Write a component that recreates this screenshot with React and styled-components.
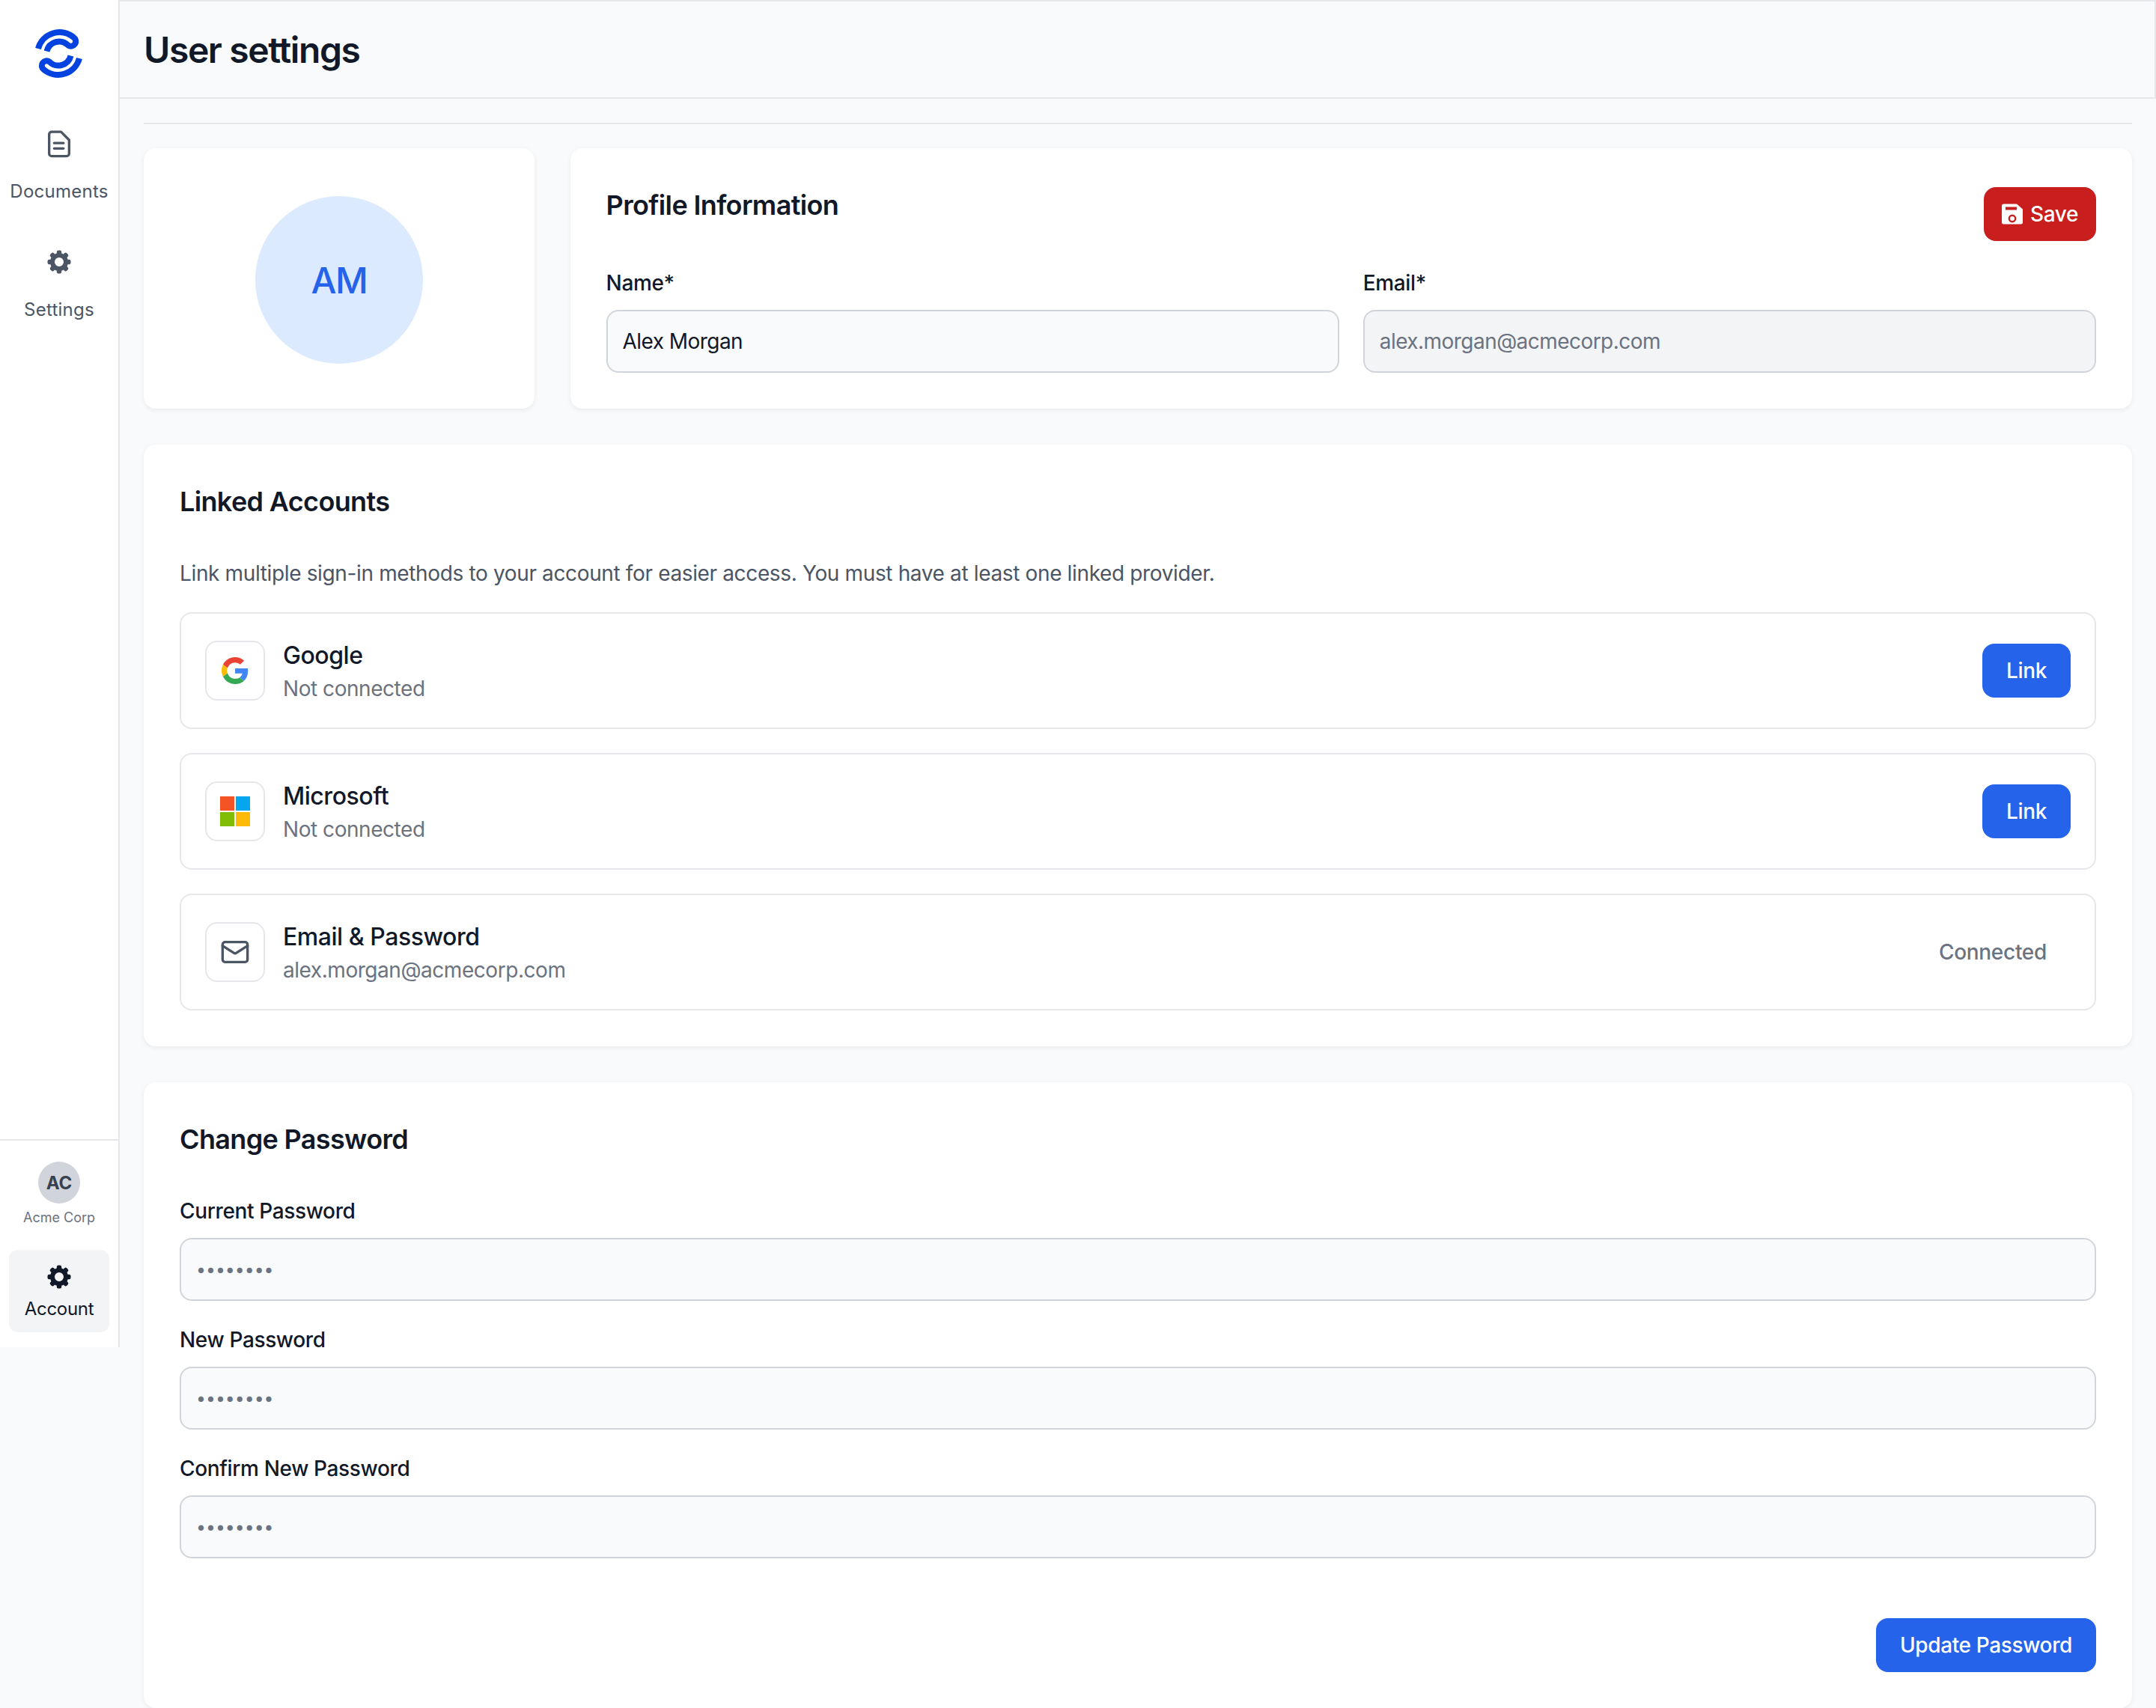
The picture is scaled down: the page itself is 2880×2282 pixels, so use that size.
import React from "react";
import styled, { createGlobalStyle } from "styled-components";
import { Mail } from "lucide-react";

const GlobalStyle = createGlobalStyle`
  * {
    box-sizing: border-box;
  }
  body {
    margin: 0;
    background: #f9fafb;
    font-family: Inter, "Noto Sans", sans-serif;
    color: #111827;
  }
`;

const Logo = () => (
  <LogoSvg viewBox="0 0 80 80" fill="none" stroke="#0443e0" strokeWidth="8">
    <path d="M12 33 A29.5 29.5 0 0 1 59.5 18 A6.4 6.4 0 0 1 52 28.5 A17 17 0 0 0 23.500 36.5" />
    <path
      d="M12 33 A29.5 29.5 0 0 1 59.5 18 A6.4 6.4 0 0 1 52 28.5 A17 17 0 0 0 23.500 36.5"
      transform="rotate(180 39.5 39.5)"
    />
  </LogoSvg>
);

const DocIcon = () => (
  <svg width="40" height="40" viewBox="0 0 24 24" fill="none" stroke="#4b5563" strokeWidth="2" strokeLinejoin="round">
    <path d="M6 2.5h7.5L20 9v11a2 2 0 0 1-2 2H6a2 2 0 0 1-2-2V4.500a2 2 0 0 1 2-2z" />
    <path d="M8 11.500h7.500M8 15.800h7.500" strokeLinecap="round" />
  </svg>
);

const Gear = ({ color }) => (
  <svg width="32" height="32" viewBox="0 0 32 32" fill="none">
    <circle cx="16" cy="16" r="9" stroke={color} strokeWidth="6" />
    {[0, 45, 90, 135, 180, 225, 270, 315].map((a) => (
      <rect key={a} x="12.800" y="0.500" width="6.400" height="7" rx="2.200" fill={color} transform={`rotate(${a} 16 16)`} />
    ))}
  </svg>
);

const SaveIcon = () => (
  <svg width="28" height="28" viewBox="0 0 28 28">
    <path d="M3 0.500H20L28 7.500V25a2.500 2.500 0 0 1-2.500 2.500H2.500A2.500 2.500 0 0 1 0 25V3a2.500 2.500 0 0 1 3-2.500z" fill="#fff" />
    <rect x="5" y="4.500" width="15" height="4" fill="#c81e1e" />
    <circle cx="14" cy="20" r="4.200" fill="#fff" stroke="#c81e1e" strokeWidth="2.400" />
  </svg>
);

const GoogleIcon = () => (
  <svg width="36" height="36" viewBox="0 0 48 48">
    <path fill="#EA4335" d="M24 9.500c3.540 0 6.710 1.220 9.210 3.600l6.850-6.850C35.900 2.380 30.470 0 24 0 14.620 0 6.510 5.380 2.560 13.220l7.980 6.190C12.430 13.720 17.740 9.500 24 9.500z" />
    <path fill="#4285F4" d="M46.980 24.550c0-1.570-.15-3.090-.38-4.550H24v9.020h12.940c-.58 2.960-2.260 5.480-4.780 7.180l7.730 6c4.510-4.180 7.090-10.360 7.090-17.650z" />
    <path fill="#FBBC05" d="M10.530 28.590c-.48-1.450-.76-2.990-.76-4.590s.27-3.140.76-4.590l-7.980-6.190C.92 16.460 0 20.120 0 24c0 3.880.92 7.540 2.560 10.780l7.970-6.190z" />
    <path fill="#34A853" d="M24 48c6.480 0 11.930-2.130 15.890-5.810l-7.730-6c-2.150 1.450-4.920 2.300-8.160 2.300-6.260 0-11.570-4.220-13.470-9.910l-7.980 6.190C6.510 42.620 14.620 48 24 48z" />
  </svg>
);

const MicrosoftIcon = () => (
  <svg width="40" height="40" viewBox="0 0 40 40">
    <rect width="19" height="19" fill="#f35325" />
    <rect x="21" width="19" height="19" fill="#05a6f0" />
    <rect y="21" width="19" height="19" fill="#81bc06" />
    <rect x="21" y="21" width="19" height="19" fill="#ffba08" />
  </svg>
);

const providers = [
  { name: "Google", sub: "Not connected", icon: <GoogleIcon /> },
  { name: "Microsoft", sub: "Not connected", icon: <MicrosoftIcon /> },
  {
    name: "Email & Password",
    sub: "alex.morgan@acmecorp.com",
    icon: <Mail size={40} color="#4b5563" />,
    connected: true,
  },
];

const passwordFields = ["Current Password", "New Password", "Confirm New Password"];

const App = () => {
  return (
    <Page>
      <GlobalStyle />
      <Sidebar>
        <Logo />
        <NavItem>
          <IconSlot>
            <DocIcon />
          </IconSlot>
          <span>Documents</span>
        </NavItem>
        <NavItem>
          <IconSlot>
            <Gear color="#4b5563" />
          </IconSlot>
          <span>Settings</span>
        </NavItem>
        <SidebarBottom>
          <OrgBadge>AC</OrgBadge>
          <OrgName>Acme Corp</OrgName>
          <AccountItem>
            <Gear color="#111827" />
            <span>Account</span>
          </AccountItem>
        </SidebarBottom>
      </Sidebar>
      <Content>
        <Header>
          <Title>User settings</Title>
        </Header>
        <Main>
          <Divider />
          <TopGrid>
            <AvatarCard>
              <Avatar>AM</Avatar>
            </AvatarCard>
            <Card>
              <ProfileHeader>
                <CardTitle>Profile Information</CardTitle>
                <SaveButton>
                  <SaveIcon />
                  Save
                </SaveButton>
              </ProfileHeader>
              <NameGrid>
                <Field>
                  <Label>Name*</Label>
                  <Input value="Alex Morgan" readOnly />
                </Field>
                <Field>
                  <Label>Email*</Label>
                  <Input $disabled value="alex.morgan@acmecorp.com" readOnly />
                </Field>
              </NameGrid>
            </Card>
          </TopGrid>

          <Card>
            <CardTitle>Linked Accounts</CardTitle>
            <Description>
              Link multiple sign-in methods to your account for easier access. You must have at least one linked provider.
            </Description>
            <ProviderList>
              {providers.map((p) => (
                <ProviderRow key={p.name}>
                  <ProviderIcon>{p.icon}</ProviderIcon>
                  <ProviderText>
                    <ProviderName>{p.name}</ProviderName>
                    <ProviderSub>{p.sub}</ProviderSub>
                  </ProviderText>
                  {p.connected ? <ConnectedText>Connected</ConnectedText> : <PrimaryButton>Link</PrimaryButton>}
                </ProviderRow>
              ))}
            </ProviderList>
          </Card>

          <Card>
            <CardTitle>Change Password</CardTitle>
            <PasswordList>
              {passwordFields.map((label) => (
                <Field key={label}>
                  <Label>{label}</Label>
                  <PasswordInput type="password" value="12345678" readOnly />
                </Field>
              ))}
            </PasswordList>
            <FormActions>
              <PrimaryButton>Update Password</PrimaryButton>
            </FormActions>
          </Card>
        </Main>
      </Content>
    </Page>
  );
};

const Page = styled.div`
  display: flex;
  align-items: flex-start;
  width: 2880px;
  min-height: 2282px;
`;

const Sidebar = styled.aside`
  display: flex;
  flex-direction: column;
  align-items: center;
  flex: 0 0 160px;
  height: 1800px;
  padding-top: 32px;
  background: #fff;
  border-right: 2px solid #e5e7eb;
`;

const LogoSvg = styled.svg`
  width: 80px;
  height: 80px;
  margin-bottom: 60px;
`;

const NavItem = styled.div`
  display: flex;
  flex-direction: column;
  align-items: center;
  gap: 26px;
  margin-bottom: 56px;
  font-size: 24px;
  line-height: 36px;
  letter-spacing: 0.25px;
  color: #4b5563;
`;

const IconSlot = styled.div`
  display: flex;
  align-items: center;
  justify-content: center;
  height: 40px;
`;

const SidebarBottom = styled.div`
  display: flex;
  flex-direction: column;
  align-items: center;
  width: 100%;
  margin-top: auto;
  padding: 28px 12px 20px;
  border-top: 2px solid #e5e7eb;
`;

const OrgBadge = styled.div`
  display: flex;
  align-items: center;
  justify-content: center;
  width: 56px;
  height: 56px;
  border-radius: 50%;
  background: #d1d5db;
  color: #374151;
  font-size: 24px;
  font-weight: 700;
`;

const OrgName = styled.div`
  margin-top: 5px;
  font-size: 18px;
  line-height: 28px;
  color: #6b7280;
`;

const AccountItem = styled.div`
  display: flex;
  flex-direction: column;
  align-items: center;
  gap: 9px;
  width: 100%;
  height: 110px;
  margin-top: 29px;
  padding-top: 20px;
  border-radius: 12px;
  background: #f3f4f6;
  font-size: 24px;
  line-height: 36px;
  letter-spacing: -0.3px;
  color: #111827;
`;

const Content = styled.div`
  flex: 1;
  min-width: 0;
`;

const Header = styled.header`
  display: flex;
  align-items: center;
  height: 132px;
  padding: 2px 32px 0;
  border-top: 2px solid #e5e7eb;
  border-right: 2px solid #e5e7eb;
  border-bottom: 2px solid #e5e7eb;
`;

const Title = styled.h1`
  margin: 0;
  font-size: 48px;
  line-height: 64px;
  font-weight: 600;
  letter-spacing: -1.4px;
  color: #111827;
`;

const Main = styled.main`
  display: flex;
  flex-direction: column;
  gap: 48px;
  padding: 32px 32px 0;
`;

const Divider = styled.hr`
  height: 2px;
  margin: 0 0 -16px;
  border: none;
  background: #e5e7eb;
`;

const TopGrid = styled.div`
  display: grid;
  grid-template-columns: 1fr 4fr;
  gap: 48px;
`;

const Card = styled.section`
  padding: 48px;
  border-radius: 16px;
  background: #fff;
  box-shadow: 0 2px 6px rgba(0, 0, 0, 0.07);
`;

const AvatarCard = styled(Card)`
  display: flex;
  justify-content: center;
  padding-top: 64px;
`;

const Avatar = styled.div`
  display: flex;
  align-items: center;
  justify-content: center;
  width: 224px;
  height: 224px;
  border-radius: 50%;
  background: #dbeafe;
  color: #2563eb;
  font-size: 48px;
  font-weight: 500;
  letter-spacing: -1.5px;
`;

const ProfileHeader = styled.div`
  display: flex;
  align-items: flex-start;
  justify-content: space-between;
  height: 112px;
`;

const CardTitle = styled.h2`
  margin: 0;
  font-size: 36px;
  line-height: 56px;
  font-weight: 600;
  letter-spacing: -0.65px;
  color: #111827;
`;

const Button = styled.button`
  display: inline-flex;
  align-items: center;
  height: 72px;
  border: none;
  border-radius: 16px;
  font-family: inherit;
  font-size: 28px;
  font-weight: 500;
  letter-spacing: -0.37px;
  color: #fff;
`;

const SaveButton = styled(Button)`
  gap: 10px;
  margin-top: 4px;
  padding: 0 24px;
  background: #c81e1e;
`;

const PrimaryButton = styled(Button)`
  padding: 0 32px;
  background: #2563eb;
`;

const NameGrid = styled.div`
  display: grid;
  grid-template-columns: 1fr 1fr;
  gap: 32px;
`;

const Field = styled.div`
  display: flex;
  flex-direction: column;
  gap: 16px;
`;

const Label = styled.label`
  font-size: 28px;
  line-height: 40px;
  font-weight: 500;
  letter-spacing: -0.36px;
  color: #111827;
`;

const Input = styled.input`
  width: 100%;
  height: 84px;
  padding: 0 20px;
  border: 2px solid #d1d5db;
  border-radius: 16px;
  outline: none;
  background: ${(p) => (p.$disabled ? "#f3f4f6" : "#f9fafb")};
  font-family: inherit;
  font-size: 28px;
  letter-spacing: -0.55px;
  color: ${(p) => (p.$disabled ? "#6b7280" : "#111827")};
`;

const PasswordInput = styled(Input)`
  font-size: 23px;
  letter-spacing: 0;
  color: #6b7280;
`;

const Description = styled.p`
  margin: 48px 0 32px;
  font-size: 28px;
  line-height: 40px;
  letter-spacing: -0.36px;
  color: #4b5563;
`;

const ProviderList = styled.div`
  display: flex;
  flex-direction: column;
  gap: 32px;
`;

const ProviderRow = styled.div`
  display: flex;
  align-items: center;
  height: 156px;
  padding: 0 32px;
  border: 2px solid #e5e7eb;
  border-radius: 16px;
`;

const ProviderIcon = styled.div`
  display: flex;
  align-items: center;
  justify-content: center;
  flex: 0 0 80px;
  height: 80px;
  margin-right: 24px;
  border: 2px solid #e5e7eb;
  border-radius: 16px;
  background: #fff;
`;

const ProviderText = styled.div`
  flex: 1;
`;

const ProviderName = styled.div`
  font-size: 32px;
  line-height: 48px;
  font-weight: 500;
  letter-spacing: -0.46px;
  color: #111827;
`;

const ProviderSub = styled.div`
  font-size: 28px;
  line-height: 40px;
  letter-spacing: -0.45px;
  color: #6b7280;
`;

const ConnectedText = styled.span`
  padding: 0 32px;
  font-size: 28px;
  font-weight: 500;
  letter-spacing: -0.3px;
  color: #6b7280;
`;

const PasswordList = styled.div`
  display: flex;
  flex-direction: column;
  gap: 32px;
  margin-top: 48px;
`;

const FormActions = styled.div`
  display: flex;
  justify-content: flex-end;
  margin-top: 80px;
`;

export default App;
